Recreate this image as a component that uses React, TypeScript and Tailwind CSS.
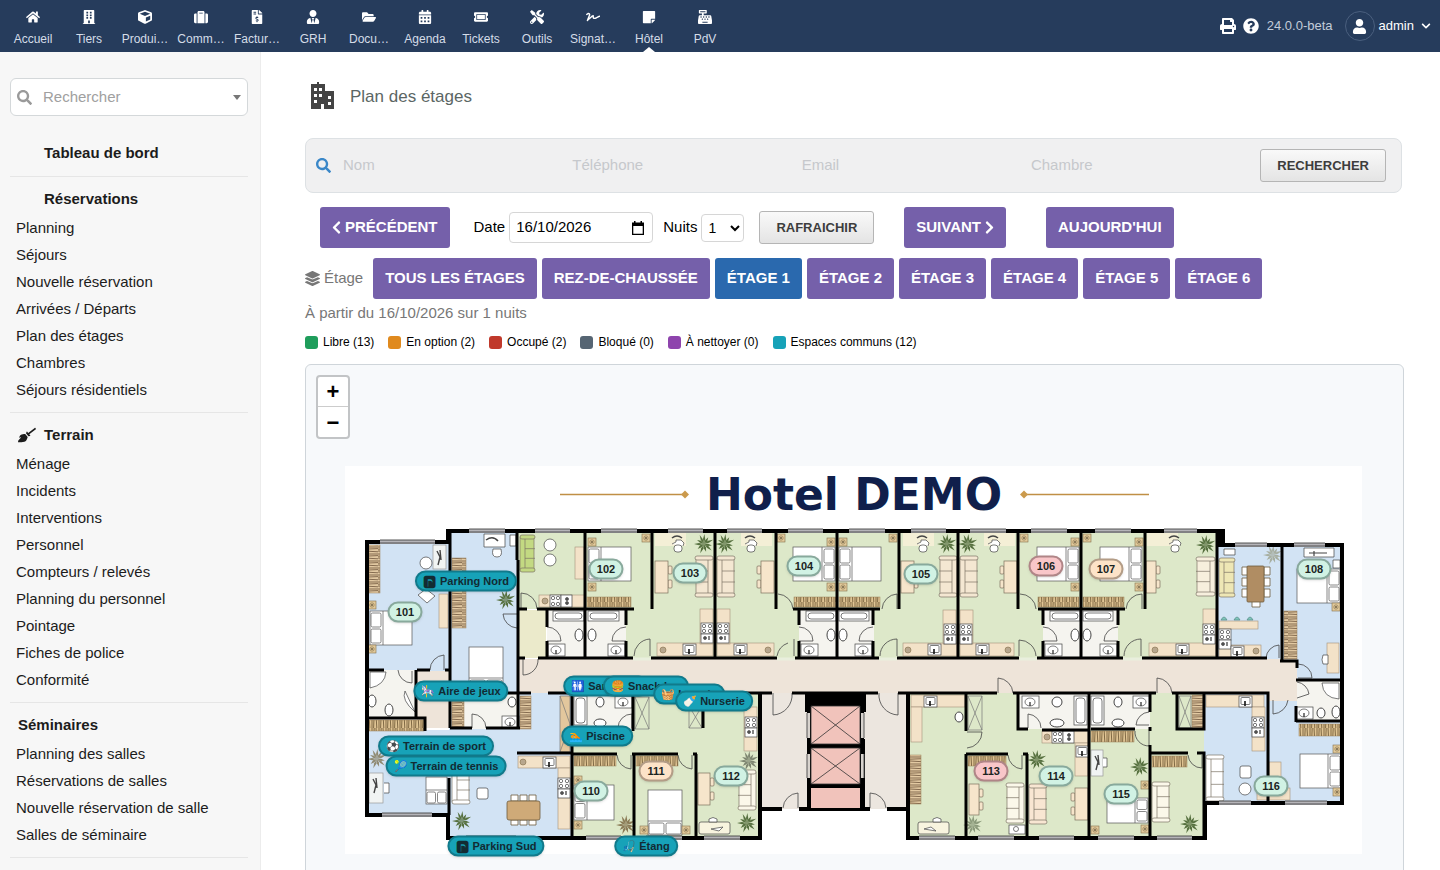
import { useState } from "react";
import type { IconType } from "react-icons";
import {
  FaBroom,
  FaBuilding,
  FaCalendarAlt,
  FaCashRegister,
  FaChevronDown,
  FaChevronLeft,
  FaChevronRight,
  FaCube,
  FaFileInvoiceDollar,
  FaFolderOpen,
  FaHome,
  FaLayerGroup,
  FaPrint,
  FaQuestionCircle,
  FaSearch,
  FaSignature,
  FaStickyNote,
  FaSuitcase,
  FaTicketAlt,
  FaTools,
  FaUser,
  FaUserTie,
} from "react-icons/fa";

const NAV: { label: string; icon: IconType; active?: boolean }[] = [
  { label: "Accueil", icon: FaHome },
  { label: "Tiers", icon: FaBuilding },
  { label: "Produi…", icon: FaCube },
  { label: "Comm…", icon: FaSuitcase },
  { label: "Factur…", icon: FaFileInvoiceDollar },
  { label: "GRH", icon: FaUserTie },
  { label: "Docu…", icon: FaFolderOpen },
  { label: "Agenda", icon: FaCalendarAlt },
  { label: "Tickets", icon: FaTicketAlt },
  { label: "Outils", icon: FaTools },
  { label: "Signat…", icon: FaSignature },
  { label: "Hôtel", icon: FaStickyNote, active: true },
  { label: "PdV", icon: FaCashRegister },
];

const MENU = [
  {
    title: "Réservations",
    indent: "pl-[34px]",
    items: ["Planning", "Séjours", "Nouvelle réservation", "Arrivées / Départs", "Plan des étages", "Chambres", "Séjours résidentiels"],
  },
  {
    title: "Terrain",
    icon: FaBroom,
    indent: "pl-2",
    items: ["Ménage", "Incidents", "Interventions", "Personnel", "Compteurs / relevés", "Planning du personnel", "Pointage", "Fiches de police", "Conformité"],
  },
  {
    title: "Séminaires",
    indent: "pl-2",
    items: ["Planning des salles", "Réservations de salles", "Nouvelle réservation de salle", "Salles de séminaire"],
  },
];

const FLOORS = ["Tous les étages", "Rez-de-chaussée", "Étage 1", "Étage 2", "Étage 3", "Étage 4", "Étage 5", "Étage 6"];

const LEGEND = [
  { label: "Libre (13)", color: "bg-[#1f9d5b]" },
  { label: "En option (2)", color: "bg-[#e08a1e]" },
  { label: "Occupé (2)", color: "bg-[#c0392b]" },
  { label: "Bloqué (0)", color: "bg-[#566573]" },
  { label: "À nettoyer (0)", color: "bg-[#8e44ad]" },
  { label: "Espaces communs (12)", color: "bg-[#17a2b8]" },
];

// Plan coordinates start at this origin
const OX = 345;
const OY = 466;

const ROOMS: [string, number, number, "free" | "option" | "busy"][] = [
  ["101", 405, 612, "free"],
  ["102", 606, 569, "free"],
  ["103", 690, 573, "free"],
  ["104", 804, 566, "free"],
  ["105", 921, 574, "free"],
  ["106", 1046, 566, "busy"],
  ["107", 1106, 569, "option"],
  ["108", 1314, 569, "free"],
  ["110", 591, 791, "free"],
  ["111", 656, 771, "option"],
  ["112", 731, 776, "free"],
  ["113", 991, 771, "busy"],
  ["114", 1056, 776, "free"],
  ["115", 1121, 794, "free"],
  ["116", 1271, 786, "free"],
];

const ROOM_COLORS = {
  free: "bg-[#d1f2e4] border-[#88a99c]",
  option: "bg-[#fde3c8] border-[#b39c86]",
  busy: "bg-[#f9c6c9] border-[#b08587]",
};

const PARKING = "🅿\uFE0E";

const AREAS: [string, string, number, number][] = [
  [PARKING, "Parking Nord", 466, 581],
  ["🎠", "Aire de jeux", 461, 691],
  ["🚻", "Sanitaires", 606, 686],
  ["🍔", "Snack-bar", 646, 686],
  ["🧺", "Laverie", 689, 694],
  ["🍼", "Nurserie", 714, 701],
  ["🏊", "Piscine", 597, 736],
  ["⚽", "Terrain de sport", 436, 746],
  ["🎾", "Terrain de tennis", 446, 766],
  [PARKING, "Parking Sud", 496, 846],
  ["🎣", "Étang", 646, 846],
];

type Box = [number, number, number, number];

const BLUE: Box[] = [
  [367, 542, 82, 129], [450, 531, 68, 162], [367, 730, 82, 85], [518, 693, 54, 62], [449, 728, 122, 110],
  [1218, 545, 65, 114], [1283, 545, 59, 136], [1268, 700, 74, 103], [1204, 693, 63, 110],
];
const GREEN: Box[] = [[518, 531, 67, 78], [585, 531, 632, 128], [572, 693, 188, 145], [908, 693, 296, 145]];
const TILED: Box[] = [
  [367, 670, 50, 48], [450, 693, 68, 36], [547, 609, 79, 49], [799, 609, 75, 49], [1043, 609, 75, 49],
  [573, 693, 60, 37], [1018, 693, 132, 36], [1297, 681, 45, 40],
];
const BEIGE: Box[] = [[518, 659, 779, 34], [1267, 665, 30, 36], [417, 671, 32, 57]];

// Thick walls, one sub-path per straight run
const OUTER =
  "M367 540V815H450M448 815V838H760V693M367 542H448V531H1223V545H1342V803H1205V838H908V693M760 809H782M799 809H870M887 809H908";
const INNER =
  "M450 531V728M517 531V560M518 560V728M585 531V658M652 531V609M715 531V658M776 531V609M837 531V658M899 531V609M958 531V658M1018 531V609M1081 531V658M1145 531V609M1217 531V658M1282 545V661" +
  "M518 609H527M537 609H634M793 609H880M1038 609H1125M547 609V627M547 641V658M626 609V625M626 641V658M799 609V625M799 641V658M873 609V625M873 641V658M1043 609V625M1043 641V658M1118 609V625M1118 641V658" +
  "M518 658H525M538 658H633M651 658H777M795 658H879M897 658H1019M1037 658H1123M1142 658H1267M1280 661H1297V668M1296 680H1342M1296 721H1344M1296 706V722" +
  "M448 693H455M500 693H531M548 693H772M792 693H878M898 693H997M1013 693H1156M1172 693H1268V803" +
  "M367 670H384M417 670H430M445 670H450M416 670V718M367 718H425V731M450 728H472M486 728H520M517 753H572M449 778V815" +
  "M572 693V838M633 693V731M703 706V728M572 754H617M632 754H678M693 754H697M634 754V838M696 754V838" +
  "M966 693V731M966 754H1008M1023 754H1028M966 754V838M1027 754V838M1018 693V729H1028M1042 730H1089M1089 693V838M1091 729H1135M1150 693V712M1150 727V731M1150 745V838M1150 753H1188M1197 753H1204V838M1177 693V729H1204V693";

const WINDOWS: Box[] = [
  [380, 541, 55, 3], [469, 530, 36, 3], [535, 530, 35, 3], [601, 530, 36, 3], [668, 530, 35, 3], [727, 530, 35, 3], [788, 530, 35, 3],
  [849, 530, 36, 3], [911, 530, 35, 3], [970, 530, 36, 3], [1031, 530, 36, 3], [1095, 530, 36, 3], [1164, 530, 33, 3],
  [1235, 544, 32, 3], [1294, 544, 31, 3], [382, 814, 50, 3], [466, 837, 50, 3], [586, 837, 35, 3], [646, 837, 36, 3], [704, 837, 36, 3],
  [919, 837, 36, 3], [978, 837, 36, 3], [1039, 837, 35, 3], [1098, 837, 36, 3], [1157, 837, 35, 3], [1219, 802, 32, 3], [1285, 802, 42, 3],
];

const DOORS =
  "M430 670A15 15 0 0 1 444 655V670M398 670A14 14 0 0 0 412 683V671M517 614H503A15 15 0 0 0 517 628M521 609V593A16 16 0 0 1 537 609M523 659V675A15 15 0 0 0 538 659" +
  "M547 627A14 14 0 0 1 561 641H547M626 627A14 14 0 0 0 612 641H626M799 627A14 14 0 0 1 813 641H799M873 627A14 14 0 0 0 859 641H873M1043 627A14 14 0 0 1 1057 641H1043M1118 627A14 14 0 0 0 1104 641H1118" +
  "M634 656A17 17 0 0 1 650 639V656M777 656A17 17 0 0 1 788 643M794 639V656M880 656A17 17 0 0 1 897 639V656M1019 640A17 17 0 0 1 1036 656M1019 656V640M1124 656A17 17 0 0 1 1141 639V656" +
  "M778 594A16 16 0 0 1 793 609M882 609A16 16 0 0 1 897 594V609M1020 594A16 16 0 0 1 1036 609M1126 609A16 16 0 0 1 1142 594V609" +
  "M773 693V715A20 20 0 0 0 792 693M879 693A20 20 0 0 0 898 715V693M998 693V678A16 16 0 0 1 1013 693M1157 693V678A16 16 0 0 1 1172 693M1273 700V714A16 16 0 0 0 1288 700M1298 664A14 14 0 0 1 1312 678H1298M1266 658A14 14 0 0 1 1279 645V658" +
  "M783 808A16 16 0 0 1 798 793V808M870 793A16 16 0 0 1 886 808M870 808V793M617 755A15 15 0 0 0 631 769V755M678 755A15 15 0 0 0 692 769V755M1008 755A15 15 0 0 0 1022 769V755M1188 755A14 14 0 0 0 1202 768V755" +
  "M967 748A16 16 0 0 0 982 732H967M1028 728V714A14 14 0 0 1 1041 728M1149 712A14 14 0 0 0 1136 725H1149M1135 731A14 14 0 0 0 1149 746V731M618 728A14 14 0 0 1 632 714V728M472 728V714A14 14 0 0 1 486 728M1297 682A14 14 0 0 1 1309 694L1297 698";

type Side = "L" | "R" | "B";

const BEDS: [number, number, number, number, Side][] = [
  [370, 611, 42, 34, "L"], [588, 547, 43, 34, "L"], [793, 547, 42, 34, "R"], [839, 547, 42, 34, "L"], [1037, 547, 42, 34, "R"],
  [1100, 547, 42, 34, "R"], [1297, 569, 43, 34, "R"], [1300, 754, 41, 34, "R"], [1107, 798, 41, 25, "R"], [574, 785, 40, 35, "L"],
  [648, 790, 34, 45, "B"], [469, 647, 34, 45, "B"], [426, 777, 21, 27, "B"],
];

const WARDROBES: Box[] = [
  [369, 545, 11, 48], [452, 558, 14, 70], [369, 720, 55, 11], [452, 695, 12, 32], [520, 696, 11, 33], [587, 597, 44, 10],
  [794, 597, 42, 10], [839, 597, 41, 10], [1038, 597, 41, 10], [1083, 597, 41, 10], [1284, 611, 13, 48], [1192, 695, 11, 33],
  [1299, 724, 41, 12], [574, 756, 42, 10], [636, 756, 42, 10], [910, 755, 11, 49], [968, 756, 38, 10], [1091, 731, 43, 11], [1152, 756, 35, 11],
];

const SOFAS: [number, number, number, number, Side, string][] = [
  [520, 535, 15, 37, "L", "#c3d982"], [695, 556, 18, 41, "R", "#f4e7d2"], [717, 556, 18, 41, "L", "#f4e7d2"],
  [939, 556, 18, 41, "R", "#f4e7d2"], [960, 556, 18, 41, "L", "#f4e7d2"], [1196, 557, 19, 39, "R", "#f7efdd"],
  [1219, 558, 16, 39, "L", "#eee7b5"], [738, 770, 18, 40, "R", "#fbf8ea"], [1006, 783, 18, 40, "R", "#fbf8ea"],
  [1029, 784, 18, 40, "L", "#f8e6d2"], [1206, 755, 18, 46, "L", "#fff"], [1152, 782, 18, 40, "L", "#fbf8ea"], [452, 766, 18, 38, "L", "#fff"],
];

const TABLES: [number, number, number, number, Side][] = [
  [655, 561, 13, 32, "R"], [761, 561, 13, 32, "L"], [901, 561, 13, 32, "R"], [1004, 561, 13, 32, "L"], [1146, 561, 10, 32, "R"],
  [698, 773, 12, 32, "R"], [969, 784, 10, 31, "R"], [1075, 788, 13, 32, "L"],
];

const WHITE_DESKS: Box[] = [[369, 773, 14, 30], [433, 545, 13, 24], [1091, 750, 12, 26]];

const PLANTS: [number, number, string?][] = [
  [506, 600], [704, 544], [725, 544], [947, 544], [968, 544], [1206, 545], [1273, 555, "#a7aea0"], [377, 759, "#8f8a72"],
  [462, 821], [749, 761, "#7d8570"], [747, 823], [626, 825, "#8a7a55"], [1037, 760], [973, 825, "#8b9a7b"], [1140, 767], [1190, 824],
];

const NIGHTSTANDS: [number, number][] = [
  [368, 601], [368, 645], [588, 538], [588, 583], [642, 534], [777, 534], [827, 538], [839, 538], [827, 583], [839, 583], [889, 534],
  [1020, 534], [1071, 538], [1083, 534], [1071, 583], [1135, 538], [1135, 583], [574, 776], [574, 821], [640, 826], [682, 826], [1332, 603],
  [1333, 745], [1333, 788], [1091, 826], [1141, 781], [1141, 825],
];

const COUNTERS: Box[] = [
  [657, 643, 56, 13], [717, 643, 57, 13], [903, 643, 54, 13], [960, 643, 54, 13], [1149, 643, 67, 13], [1219, 645, 42, 12],
  [700, 609, 13, 35], [717, 609, 13, 35], [943, 610, 13, 34], [960, 610, 13, 34], [1203, 609, 13, 34], [539, 595, 46, 12],
  [575, 547, 9, 32], [518, 756, 52, 12], [558, 768, 12, 61], [744, 707, 13, 44], [911, 695, 54, 12], [911, 707, 11, 35],
  [1042, 731, 46, 12], [1075, 743, 13, 33], [1206, 695, 58, 12], [1252, 707, 13, 44], [439, 594, 9, 34], [1327, 643, 12, 30], [1269, 762, 12, 20],
  [1219, 621, 39, 8], [1257, 788, 33, 12],
];

const STOVES: [number, number][] = [
  [701, 623], [717, 623], [944, 624], [960, 624], [1203, 624], [558, 778], [745, 717], [1252, 717], [1219, 629],
];
const WIDE_STOVES: [number, number][] = [[550, 595], [1052, 731]];
const SINKS: [number, number][] = [[683, 644], [734, 644], [928, 644], [976, 644], [1176, 644], [1231, 646], [543, 757], [924, 696], [1239, 696], [1076, 746]];

const TUBS: Box[] = [
  [553, 611, 31, 10], [588, 611, 31, 10], [806, 611, 30, 10], [839, 611, 30, 10], [1050, 611, 30, 10], [1083, 611, 30, 10],
  [574, 696, 13, 29], [1074, 696, 13, 29], [1091, 696, 13, 29],
];

const BOWLS: [number, number, number, number][] = [
  [579, 635, 4, 6], [592, 635, 4, 6], [831, 635, 4, 6], [843, 635, 4, 6], [1075, 635, 4, 6], [1087, 635, 4, 6], [600, 702, 4, 5],
  [600, 723, 6, 4], [1057, 702, 5, 5], [1057, 723, 7, 4], [1118, 702, 4, 5], [1118, 723, 6, 4], [372, 701, 4, 6], [389, 710, 4, 6],
  [512, 702, 4, 5], [1321, 713, 4, 5], [1336, 712, 4, 6], [959, 717, 4, 5],
];

const BASINS: [number, number][] = [[556, 650], [616, 650], [809, 650], [863, 650], [1053, 650], [1108, 650], [623, 702], [1030, 702], [1141, 702], [510, 722], [1304, 713]];

const CHAIRS: [number, number][] = [[677, 539], [750, 539], [922, 539], [993, 539], [1174, 539]];

function Bed({ x, y, w, h, side }: { x: number; y: number; w: number; h: number; side: Side }) {
  const pillow = side === "B"
    ? [[x + 1, y + h - 12, w / 2 - 2, 11], [x + w / 2 + 1, y + h - 12, w / 2 - 2, 11]]
    : [[side === "L" ? x + 1 : x + w - 11, y + 2, 10, h / 2 - 3], [side === "L" ? x + 1 : x + w - 11, y + h / 2 + 1, 10, h / 2 - 3]];
  const fold = side === "B" ? `M${x} ${y + h - 14}h${w}` : `M${side === "L" ? x + 13 : x + w - 13} ${y}v${h}`;
  return (
    <g fill="#fff" stroke="#555" strokeWidth=".7">
      <rect x={x} y={y} width={w} height={h} />
      <path d={fold} />
      {pillow.map(([px, py, pw, ph], i) => (
        <rect key={i} x={px} y={py} width={pw} height={ph} rx="1.5" />
      ))}
    </g>
  );
}

function Sofa({ x, y, w, h, side, fill }: { x: number; y: number; w: number; h: number; side: Side; fill: string }) {
  const back = side === "L" ? x : x + w - 5;
  const third = (h - 8) / 3;
  return (
    <g fill={fill} stroke="#7d7466" strokeWidth=".7">
      <rect x={x + 1} y={y + 3} width={w - 2} height={h - 6} />
      <path d={`M${x} ${y + 4 + third}h${w}M${x} ${y + 4 + third * 2}h${w}`} />
      <rect x={back} y={y + 1} width="5" height={h - 2} rx="2" />
      <rect x={x} y={y} width={w} height="4" rx="2" />
      <rect x={x} y={y + h - 4} width={w} height="4" rx="2" />
    </g>
  );
}

function Plant({ x, y, color = "#56703f" }: { x: number; y: number; color?: string }) {
  return (
    <g transform={`translate(${x} ${y})`} fill={color}>
      {[0, 32, 63, 100, 128, 165, 200, 232, 268, 300, 332].map((a, i) => (
        <path key={a} transform={`rotate(${a})`} d={i % 2 ? "M0 0L1.4 -4L0 -8L-1 -4Z" : "M0 0L1.2 -5L.4 -10L-1 -5Z"} />
      ))}
    </g>
  );
}

function FloorPlan() {
  return (
    <svg viewBox={`${OX} ${OY} 1017 388`} className="block h-[388px] w-[1017px]" role="img" aria-label="Hotel DEMO">
      <defs>
        <pattern id="hangV" width="14" height="7" patternUnits="userSpaceOnUse">
          <rect width="14" height="7" fill="#e2c9a2" />
          <path d="M0 1H14M0 3.2L14 2.6M0 5L14 5.8" stroke="#6b5238" strokeWidth=".8" />
        </pattern>
        <pattern id="hangH" width="7" height="14" patternUnits="userSpaceOnUse">
          <rect width="7" height="14" fill="#dfc493" />
          <path d="M1 0V14M3.2 0L2.6 14M5 0L5.8 14" stroke="#66502f" strokeWidth=".8" />
        </pattern>
      </defs>
      <rect x={OX} y={OY} width="1017" height="388" fill="#fff" />
      <text x="854" y="510" textAnchor="middle" fontSize="44" fontWeight="700" fill="#101f4b" fontFamily="DejaVu Sans, sans-serif">
        Hotel DEMO
      </text>
      <path d="M560 494.500H685M1024 494.500H1149" stroke="#c08f45" strokeWidth="1.300" />
      <path d="M685 490.500l4 4-4 4-4-4zM1024 490.500l4 4-4 4-4-4z" fill="#cb9a4c" />

      <path d="M760 693H908V809H760Z" fill="#ece6df" />
      {BLUE.map(([x, y, w, h], i) => <rect key={i} x={x} y={y} width={w} height={h} fill="#d2e3f4" />)}
      {GREEN.map(([x, y, w, h], i) => <rect key={i} x={x} y={y} width={w} height={h} fill="#dde8c9" />)}
      {BEIGE.map(([x, y, w, h], i) => <rect key={i} x={x} y={y} width={w} height={h} fill="#eee4d9" />)}
      {TILED.map(([x, y, w, h], i) => <rect key={i} x={x} y={y} width={w} height={h} fill="#f5f4ef" />)}
      <rect x="519" y="610" width="27" height="48" fill="#ebeacb" />

      {/* openings left by the doors */}
      <path d="M633 659H651M777 659H795M879 659H897M1019 659H1037M1123 659H1142" stroke="#e9efdd" strokeWidth="3" />

      {/* furniture */}
      <g stroke="#9a7f58" strokeWidth=".5">
        {WARDROBES.map(([x, y, w, h], i) => (
          <rect key={i} x={x} y={y} width={w} height={h} fill={w > h ? "url(#hangH)" : "url(#hangV)"} />
        ))}
      </g>
      <g fill="#f3e2c8" stroke="#a3927a" strokeWidth=".6">
        {COUNTERS.map(([x, y, w, h], i) => <rect key={i} x={x} y={y} width={w} height={h} />)}
        {[[655, 533], [741, 533], [903, 533], [984, 533], [1147, 533]].map(([x, y]) => (
          <rect key={x} x={x} y={y} width="31" height="13" fill="#f4efd6" stroke="none" />
        ))}
      </g>
      <g fill="#fff" stroke="#444" strokeWidth=".7">
        {CHAIRS.map(([x, y]) => (
          <g key={x}>
            <path d={`M${x - 5} ${y - 1}q5 -4 10 0`} strokeWidth="1.600" fill="none" />
            <path d={`M${x - 5} ${y + 5}l4 -2v-2h5l3 3-1 3`} />
            <rect x={x - 3} y={y + 6} width="8" height="7" rx="3" />
          </g>
        ))}
        {STOVES.map(([x, y]) => (
          <g key={`${x}-${y}`}>
            <rect x={x} y={y} width="12" height="11" />
            <rect x={x} y={y + 11} width="12" height="9" />
            <circle cx={x + 3} cy={y + 3} r="1.700" />
            <circle cx={x + 9} cy={y + 3} r="1.700" />
            <circle cx={x + 3} cy={y + 8} r="1.700" />
            <circle cx={x + 9} cy={y + 8} r="1.700" />
            <circle cx={x + 4} cy={y + 15} r="1.500" fill="#555" />
            <path d={`M${x + 8} ${y + 13}v4`} strokeWidth="1.300" />
          </g>
        ))}
        {WIDE_STOVES.map(([x, y]) => (
          <g key={`${x}-${y}`}>
            <rect x={x} y={y} width="11" height="12" />
            <rect x={x + 11} y={y} width="11" height="12" />
            <circle cx={x + 3} cy={y + 3} r="1.700" />
            <circle cx={x + 8} cy={y + 3} r="1.700" />
            <circle cx={x + 3} cy={y + 9} r="1.700" />
            <circle cx={x + 8} cy={y + 9} r="1.700" />
            <circle cx={x + 17} cy={y + 4} r="1.500" fill="#555" />
            <circle cx={x + 17} cy={y + 8} r="1.500" fill="#555" />
          </g>
        ))}
        {SINKS.map(([x, y]) => (
          <g key={`${x}-${y}`}>
            <rect x={x} y={y} width="13" height="11" />
            <rect x={x + 2} y={y + 1.5} width="9" height="7" rx="1" />
            <path d={`M${x + 6} ${y + 5}v5`} stroke="#111" strokeWidth="1.600" />
          </g>
        ))}
        {TUBS.map(([x, y, w, h]) => (
          <g key={`${x}-${y}`}>
            <rect x={x} y={y} width={w} height={h} />
            <rect x={x + 2} y={y + 2} width={w - 4} height={h - 4} rx="3" />
          </g>
        ))}
        {BASINS.map(([x, y]) => (
          <g key={`${x}-${y}`}>
            <rect x={x - 8} y={y - 6} width="17" height="12" />
            <ellipse cx={x} cy={y} rx="5" ry="4" />
            <path d={`M${x} ${y}v4`} stroke="#222" strokeWidth="1.200" />
          </g>
        ))}
        {BOWLS.map(([x, y, rx, ry]) => <ellipse key={`${x}-${y}`} cx={x} cy={y} rx={rx} ry={ry} strokeWidth="1" />)}
        {WHITE_DESKS.map(([x, y, w, h]) => (
          <g key={`${x}-${y}`}>
            <rect x={x} y={y} width={w} height={h} fill="#f1f4f3" stroke="#999" />
            <path d={`M${x + 4} ${y + 6}l3 6-2 8M${x + 7} ${y + 5}l1 10`} fill="none" strokeWidth="1.400" />
          </g>
        ))}
        <path d="M370 672h16q-1 13-16 16zM405 691q-4 9 10 21zM1322 683h17v16q-16-1-17-16z" />
        <path d="M384 783h5v10h-5M1103 758h4v9h-4" />
        <circle cx="426" cy="563" r="6" />
        <circle cx="550" cy="545" r="6" />
        <circle cx="550" cy="560" r="6" />
        <path d="M418 595l8-6 9 7-8 7zM493 549h8q2 8-4 8t-4-8M484 534h21v13h-21zM510 535h6v11h-6z" />
        <path d="M486 540q7-5 12 1" fill="none" strokeWidth="1.500" />
        <rect x="477" y="788" width="11" height="11" rx="2" />
        <rect x="1240" y="766" width="11" height="12" rx="2" />
        <circle cx="1245" cy="789" r="6" />
        <path d="M1304 548h30v9h-30zM1224 549h11v6h-11zM1333 560h7v8h-7z" />
        <path d="M1309 553h18M1314 551v5" strokeWidth="1.200" />
        <path d="M1323 655h5v9h-5q-2-4 0-9z" />
        <rect x="699" y="822" width="31" height="12" rx="2" fill="#f8f4df" />
        <rect x="918" y="822" width="31" height="12" rx="2" fill="#f8f4df" />
        <path d="M711 829l12-2-4 4zM924 829l12 2-5-4zM709 819q4-3 8 0v3h-8zM933 819q4-3 8 0v3h-8z" />
        <rect x="1009" y="825" width="16" height="9" />
        <circle cx="1016" cy="829" r="2.500" />
      </g>
      {/* shafts */}
      <g fill="#dde8c9" stroke="#777" strokeWidth=".7">
        <path d="M635 697h14v32h-14zl14 32m0-32l-14 32M689 706h13v22h-13zl13 22m0-22l-13 22M968 696h14v34h-14zl14 34m0-34l-14 34M1179 696h12v32h-12zl12 32m0-32l-12 32" />
        <path d="M560 696h10v56h-10zl10 28-10 28" fill="#e3c79d" />
      </g>
      {BEDS.map(([x, y, w, h, side]) => <Bed key={`${x}-${y}`} x={x} y={y} w={w} h={h} side={side} />)}
      {SOFAS.map(([x, y, w, h, side, fill]) => <Sofa key={`${x}-${y}`} x={x} y={y} w={w} h={h} side={side} fill={fill} />)}
      <g stroke="#7b6f5c" strokeWidth=".7" fill="#f6e5cb">
        {TABLES.map(([x, y, w, h, side]) => (
          <g key={`${x}-${y}`}>
            <rect x={side === "R" ? x + w : x - 4} y={y + 5} width="4" height="8" rx="1" />
            <rect x={side === "R" ? x + w : x - 4} y={y + h - 13} width="4" height="8" rx="1" />
            <rect x={x} y={y} width={w} height={h} />
          </g>
        ))}
      </g>
      <g stroke="#6d5a3e" strokeWidth=".8" fill="#fff">
        {[511, 520, 529].map((x) => <path key={x} d={`M${x} 795h7v6h-7zM${x} 820h7v5h-7z`} />)}
        <rect x="507" y="801" width="33" height="19" rx="2" fill="#cfaa78" />
        {[567, 578, 589].map((y) => <path key={y} d={`M1242 ${y}h6v8h-6zM1264 ${y}h6v8h-6z`} />)}
        <path d="M1252 601h8v6h-8z" />
        <rect x="1247" y="566" width="17" height="36" rx="1" fill="#b08d63" />
      </g>
      <g fill="#7fc6bd" stroke="#4d7f78" strokeWidth=".6">
        <path d="M1221 620q3-6 6 0zM1234 620q3-6 6 0zM1247 620q3-6 6 0z" />
      </g>
      <g fill="#e3cb9c" stroke="#84704c" strokeWidth=".6">
        {NIGHTSTANDS.map(([x, y]) => (
          <g key={`${x}-${y}`}>
            <rect x={x} y={y} width="8" height="8" />
            <circle cx={x + 4} cy={y + 4} r="2.200" />
            <circle cx={x + 4} cy={y + 4} r=".8" fill="#333" />
          </g>
        ))}
        {[[659, 645], [764, 645], [904, 645], [1004, 645], [1151, 645], [1252, 646], [519, 757], [541, 596], [1043, 732]].map(([x, y]) => (
          <circle key={x} cx={x + 4} cy={y + 5} r="3" fill="#b8a78e" />
        ))}
      </g>
      {PLANTS.map(([x, y, color]) => <Plant key={`${x}-${y}`} x={x} y={y} color={color} />)}
      <path d={DOORS} fill="none" stroke="#444" strokeWidth=".8" />

      {/* walls */}
      <path d={INNER} fill="none" stroke="#000" strokeWidth="3" />
      <path d={OUTER} fill="none" stroke="#000" strokeWidth="4" strokeLinejoin="miter" />
      <path d="M1217 531H1225V547H1217Z" />
      {WINDOWS.map(([x, y, w, h]) => (
        <g key={`${x}-${y}`}>
          <rect x={x} y={y - 1} width={w} height={h + 1} fill="#b5b4b8" />
          <path d={`M${x} ${y - 1}h${w}M${x} ${y + 2}h${w}`} stroke="#444" strokeWidth=".9" />
        </g>
      ))}

      {/* lifts */}
      <path d="M805 693H866V712H861V706H811V712H805ZM807 739H811V811H807ZM861 739H865V811H861Z" />
      <rect x="807" y="706" width="57" height="104" />
      <g fill="#f1c3bb" stroke="#333" strokeWidth=".8">
        <path d="M811 706h49v38h-49zl49 38m0-38l-49 38M811 748h49v36h-49zl49 36m0-36l-49 36" />
        <rect x="811" y="788" width="49" height="20" stroke="none" />
      </g>
      <path d="M808.500 713V738M808.500 754V778M862.500 713V738M862.500 754V778" stroke="#d8d3ce" strokeWidth="3" />
      <path d="M807 713V738M807 754V778M864 713V738M864 754V778" stroke="#555" strokeWidth="1" />
    </svg>
  );
}

function MapPins() {
  return (
    <>
      {ROOMS.map(([label, x, y, status]) => (
        <button
          key={label}
          type="button"
          style={{ left: x - OX, top: y - OY }}
          className={`absolute flex h-[21px] w-[35px] -translate-x-1/2 -translate-y-1/2 items-center justify-center rounded-full border-2 text-[11px] font-bold text-[#1b2422] shadow ${ROOM_COLORS[status]}`}
        >
          {label}
        </button>
      ))}
      {AREAS.map(([emoji, label, x, y]) => (
        <button
          key={label}
          type="button"
          style={{ left: x - OX, top: y - OY }}
          className="absolute flex h-[21px] -translate-x-1/2 -translate-y-1/2 items-center gap-[3px] whitespace-nowrap rounded-full border-2 border-[#117a8b] bg-[#17a2b8] px-[6px] text-[11px] font-bold text-[#122b33] shadow"
        >
          <span aria-hidden="true" className={`w-[14px] text-center leading-none ${emoji === PARKING ? "text-sm" : ""}`}>{emoji}</span>
          {label}
        </button>
      ))}
    </>
  );
}

function Header() {
  return (
    <header className="flex h-[52px] shrink-0 items-stretch bg-[#263c5c] text-white">
      <nav className="flex pl-[5px]">
        {NAV.map(({ label, icon: Icon, active }) => (
          <a key={label} href="#" className="relative flex w-14 flex-col items-center pt-2.5 text-xs leading-4 text-[#d5dde8]">
            <Icon className="mb-[7px] h-[14px] w-auto text-white" />
            {label}
            {active && <span className="absolute bottom-0 border-x-[6px] border-b-[5px] border-x-transparent border-b-white" />}
          </a>
        ))}
      </nav>
      <div className="ml-auto flex items-center pr-[9px] text-[13px]">
        <a href="#" aria-label="Imprimer"><FaPrint className="size-4" /></a>
        <a href="#" aria-label="Aide" className="ml-[7px]"><FaQuestionCircle className="size-4" /></a>
        <span className="ml-2 text-[#c3ccd9]">24.0.0-beta</span>
        <button type="button" className="ml-3 flex items-center">
          <span className="flex size-[30px] items-center justify-center rounded-full border border-[#4a5f7e]">
            <FaUser className="size-[15px]" />
          </span>
          <span className="ml-1">admin</span>
          <FaChevronDown className="ml-[7px] size-[10px]" />
        </button>
      </div>
    </header>
  );
}

function Sidebar() {
  return (
    <aside className="w-[261px] shrink-0 border-r border-[#ececec] bg-[#f7f7f7] pt-[26px] pr-3 pl-2.5 text-[15px] text-[#1c1c1c]">
      <label className="flex h-[38px] items-center rounded-md border border-[#d4d8da] bg-white px-[6px] text-[#9a9a9a]">
        <FaSearch className="size-[15px] shrink-0" />
        <input type="search" aria-label="Rechercher" placeholder="Rechercher" className="ml-[11px] w-full min-w-0 outline-none placeholder:text-[#a0a0a0]" />
        <span className="shrink-0 border-x-4 border-t-[5px] border-x-transparent border-t-[#777]" />
      </label>
      <nav>
        <a href="#" className="mt-[23px] mb-[9px] block pl-[34px] leading-7 font-bold">Tableau de bord</a>
        {MENU.map(({ title, icon: Icon, indent, items }) => (
          <section key={title} className="border-t border-[#e6e6e6] pt-2 pb-[9px]">
            <h2 className={`mb-px flex items-center leading-7 font-bold ${indent}`}>
              {Icon && <Icon className="mr-2 size-[18px]" />}
              {title}
            </h2>
            {items.map((item) => (
              <a key={item} href="#" className="block pl-1.5 leading-[27px]">{item}</a>
            ))}
          </section>
        ))}
        <div className="border-t border-[#e6e6e6]" />
      </nav>
    </aside>
  );
}

const actionButton = "flex h-[41px] items-center rounded-[3px] px-3 font-bold text-white uppercase";
const greyButton =
  "h-[33px] rounded-[3px] border border-[#b5b5b5] bg-linear-to-b from-[#f9f9f9] to-[#e4e4e4] px-4 text-[13px] font-bold text-[#3d3d3d] uppercase";

export default function App() {
  const [floor, setFloor] = useState("Étage 1");

  return (
    <div className="flex h-screen flex-col overflow-hidden bg-white font-['Liberation_Sans',Arial,sans-serif]">
      <Header />
      <div className="flex min-h-0 flex-1">
        <Sidebar />
        <main className="min-w-0 flex-1 pt-7 pr-9 pl-11 text-[15px]">
          <div className="flex h-[34px] items-center pl-1.5">
            <svg viewBox="0 0 24 27" className="mb-1 h-[27px] w-6" fill="#444" aria-hidden="true">
              <path
                fillRule="evenodd"
                d="M0 2H6V0H8V2H14V9H23V27H13V22H10V27H0ZM3 6V9H6V6ZM8 6V9H11V6ZM3 12V15H6V12ZM8 12V15H11V12ZM3 18V21H6V18ZM17 14V17H20V14ZM17 20V23H20V20Z"
              />
            </svg>
            <h1 className="ml-[15px] text-[17px] text-[#5b6664]">Plan des étages</h1>
          </div>

          <form className="mt-6 mr-0.5 flex h-[55px] items-center rounded-lg border border-[#dde1e4] bg-[#f0f0f1] pr-[15px] pl-2.5">
            <FaSearch className="size-[15px] shrink-0 text-[#3a87c8]" />
            {["Nom", "Téléphone", "Email", "Chambre"].map((name) => (
              <input key={name} aria-label={name} placeholder={name} className="w-0 min-w-0 flex-1 bg-transparent pl-3 outline-none placeholder:text-[#c6c8cc]" />
            ))}
            <button type="button" className={`${greyButton} ml-3`}>Rechercher</button>
          </form>

          <div className="mt-3.5 flex items-center pl-[15px]">
            <button type="button" className={`${actionButton} gap-1 bg-[#7560aa]`}>
              <FaChevronLeft className="h-[15px] w-[9px] shrink-0" aria-hidden="true" />
              Précédent
            </button>
            <label htmlFor="date" className="ml-6">Date</label>
            <div className="ml-1 flex h-[31px] w-36 items-center rounded border border-[#d6d6d6] pr-2 pl-[6px]">
              <input id="date" type="text" inputMode="numeric" defaultValue="16/10/2026" className="w-full min-w-0 outline-none" />
              <svg viewBox="0 0 12 14" className="h-[14px] w-3 shrink-0" aria-hidden="true">
                <path fillRule="evenodd" d="M0 1.500H2V0H3.500V1.500H8.500V0H10V1.500H12V14H0ZM1.300 5V12.700H10.700V5Z" />
              </svg>
            </div>
            <label htmlFor="nights" className="ml-2.5">Nuits</label>
            <select id="nights" className="ml-1 h-7 w-[43px] rounded border border-[#d6d6d6] bg-white pl-0.5 text-sm">
              <option>1</option>
              <option>2</option>
              <option>3</option>
            </select>
            <button type="button" className={`${greyButton} ml-[15px]`}>Rafraichir</button>
            <button type="button" className={`${actionButton} ml-[30px] gap-1 bg-[#7560aa]`}>
              Suivant
              <FaChevronRight className="h-[15px] w-[9px] shrink-0" aria-hidden="true" />
            </button>
            <button type="button" className={`${actionButton} ml-10 bg-[#7560aa]`}>Aujourd'hui</button>
          </div>

          <div className="mt-2.5 flex items-center gap-[5px]">
            <span className="mr-[5px] flex items-center gap-1 text-[#777]">
              <FaLayerGroup className="size-[15px]" />
              Étage
            </span>
            {FLOORS.map((name) => (
              <button
                key={name}
                type="button"
                onClick={() => setFloor(name)}
                className={`${actionButton} whitespace-nowrap ${floor === name ? "bg-[#2a69ae]" : "bg-[#7560aa]"}`}
              >
                {name}
              </button>
            ))}
          </div>

          <p className="mt-1 leading-5 text-[#777]">À partir du 16/10/2026 sur 1 nuits</p>

          <ul className="mt-[11px] flex gap-[14px] text-xs leading-4">
            {LEGEND.map(({ label, color }) => (
              <li key={label} className="flex items-center gap-[5px]">
                <span className={`size-[13px] rounded-[3px] ${color}`} />
                {label}
              </li>
            ))}
          </ul>

          <section className="relative mt-3.5 flex h-[600px] justify-center overflow-hidden rounded-md border border-[#cfd5da] bg-[#f7f9fb] pt-[101px] pr-0.5">
            <div className="absolute top-2.5 left-2.5 overflow-hidden rounded border-2 border-[#c2c4c6] bg-white">
              <button type="button" aria-label="Zoom avant" className="flex h-[30px] w-[30px] items-center justify-center border-b border-[#ccc] text-[22px] font-bold">+</button>
              <button type="button" aria-label="Zoom arrière" className="flex h-[30px] w-[30px] items-center justify-center text-[22px] font-bold">−</button>
            </div>
            <div className="relative h-[388px] w-[1017px] shrink-0">
              <FloorPlan />
              <MapPins />
            </div>
          </section>
        </main>
      </div>
    </div>
  );
}
